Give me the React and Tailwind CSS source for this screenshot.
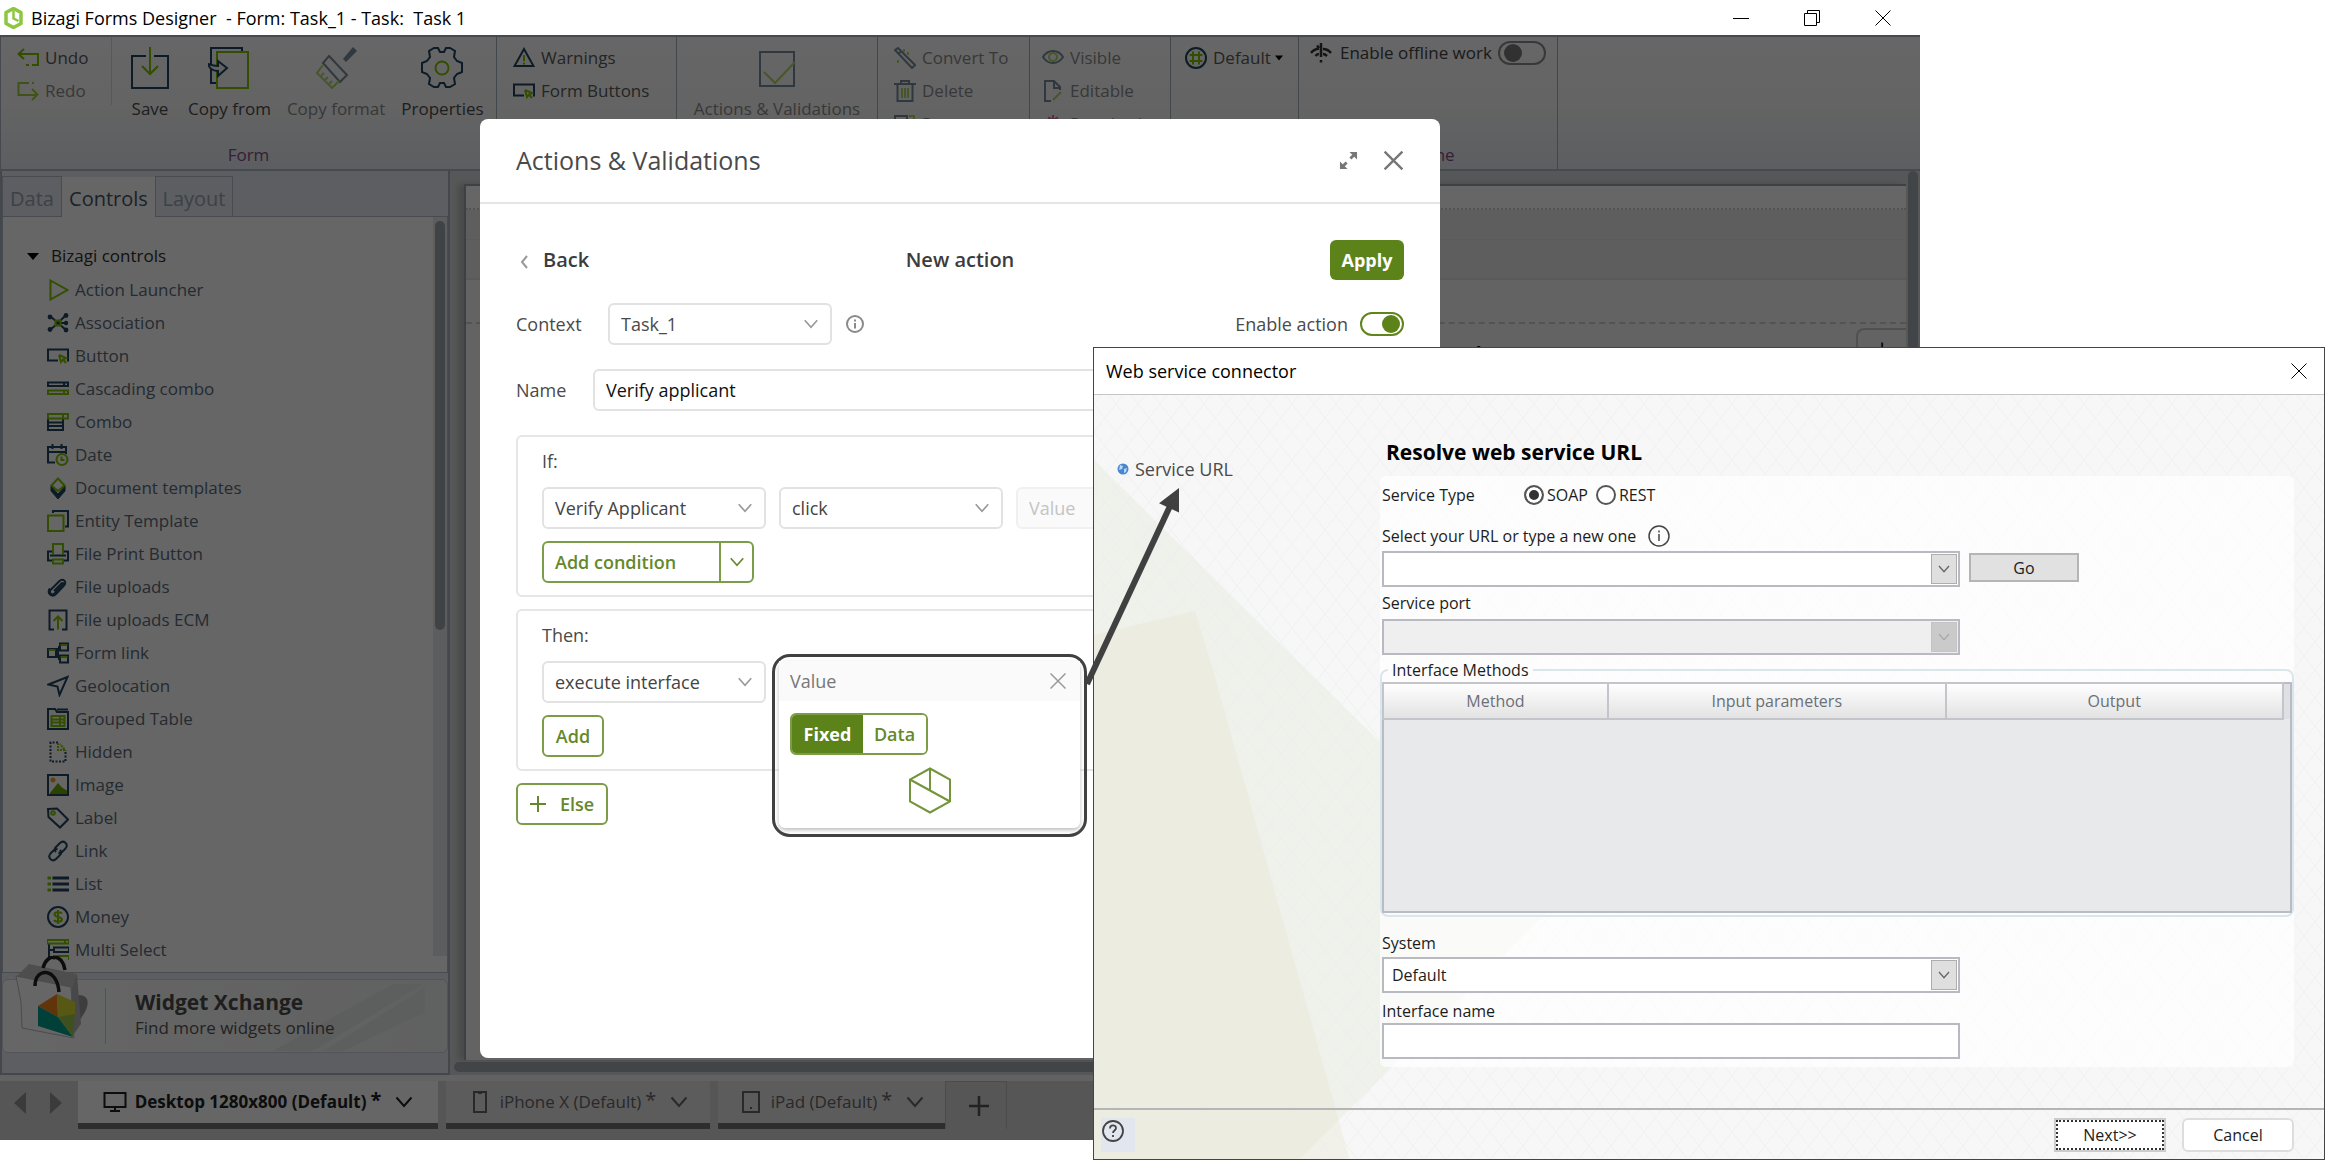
import { useState } from 'react';

const NAVY = '#1f4560';
const LIME = '#7fc200';

// Icons of the toolbox tree, drawn on a 22x22 grid
const treeIcons = {
  launcher: <path d="M3.5 1.5l17 9.5-17 9.5z" stroke={LIME} />,
  association: (
    <>
      <path d="M3 4l8 7 8-8M3 18l8-7h8M11 11l8 7" stroke={NAVY} />
      <g fill={NAVY} stroke="none">
        <circle cx="3" cy="5" r="2.4" /><circle cx="19" cy="3.500" r="2.400" />
        <circle cx="3" cy="17.500" r="2.400" /><circle cx="19" cy="11" r="2.200" /><circle cx="19" cy="18" r="2.400" />
      </g>
      <rect x="8.500" y="8.500" width="5" height="5" stroke={LIME} />
    </>
  ),
  button: (
    <>
      <path d="M11 15.500H1V4.500h20v11h-1" stroke={NAVY} />
      <path d="M12 10l7 3-3 1.500 3 3.500M12 10l2 7 2-2.500" stroke={LIME} />
    </>
  ),
  cascading: (
    <>
      <path d="M1 4.500h20v3.500H1zM17 4.500v3" stroke={NAVY} />
      <path d="M1 12.500h20V16H1zM17 12.500V16" stroke={LIME} />
    </>
  ),
  combo: (
    <>
      <path d="M1 7v12h15V7M1 11.500h15M1 15h15" stroke={NAVY} />
      <path d="M1 3h20v4.500H1zM16 3v4.500" stroke={LIME} />
    </>
  ),
  date: (
    <>
      <path d="M8 18.500H1V3h18v7M1 8h18M5.500 0v5M14.500 0v5" stroke={NAVY} />
      <circle cx="15" cy="15.500" r="5.500" stroke={LIME} />
      <path d="M14.500 12.500V16h3" stroke={LIME} />
    </>
  ),
  layers: (
    <>
      <path d="M4 9l7 8 7-8v5l-7 8-7-8z" fill={NAVY} stroke={NAVY} strokeWidth="1" />
      <path d="M11 1.500l6.500 7L11 14 4.500 8.500z" stroke={LIME} />
    </>
  ),
  entity: (
    <>
      <path d="M6 3V1h15v15.500h-3" stroke={NAVY} />
      <rect x="1" y="5.500" width="15.500" height="15.500" stroke={LIME} />
    </>
  ),
  print: (
    <>
      <path d="M5 17.500H1V8.500h4M17 8.500h4v9h-4M3 12.500h16" stroke={NAVY} />
      <path d="M6 11.500V1h10v10.500M6 16.500h10v4H6z" stroke={LIME} />
    </>
  ),
  clip: (
    <path d="M8 14l7.500-7.500c1.500-1.500 3 0 1.500 1.500L8.500 16.500c-2.500 2.500-6.500-1-3.500-4l8.500-8.500c3.500-3.500 8 1 4.500 4.500L10 17c-4 4-10-1-6-5.500" stroke={NAVY} transform="translate(-1 1)" />
  ),
  ecm: (
    <>
      <path d="M7 20.500H2.500V1.500h17v19H15" stroke={NAVY} />
      <path d="M11 20.500V8M6.500 12L11 7.500l4.500 4.500" stroke={LIME} />
    </>
  ),
  formlink: (
    <>
      <path d="M1 7h8v8H1zM13 1.500h8v7h-8zM13 13.500h8v7h-8zM9 11h2M11 6v10M11 5h2M11 17h2" stroke={NAVY} />
      <path d="M1.500 8h7M13.500 3h7M13.500 15h7" stroke={LIME} />
    </>
  ),
  geo: <path d="M1.500 9.500L20.500 2l-8 18-2-8.500z" stroke={NAVY} />,
  grouped: (
    <>
      <path d="M1 1h7l2 3h11v17H1zM10 1.500h11" stroke={NAVY} />
      <path d="M4.500 8h13v10h-13zM4.500 11.500h13M4.500 14.500h13M13 8v10" stroke={LIME} />
    </>
  ),
  hidden: (
    <>
      <path d="M11 1.500H3.500v19h15V9" stroke={NAVY} strokeDasharray="2 1.500" />
      <path d="M11 2v7h7L13 3" stroke={LIME} strokeDasharray="2 1" />
    </>
  ),
  image: (
    <>
      <path d="M3 19l8-10 4 4.500 5 3V20H3z" fill="#6aa800" stroke="none" />
      <circle cx="6" cy="6" r="2.500" fill="#f0a020" stroke="none" />
      <rect x="1" y="1" width="20" height="20" stroke={NAVY} />
    </>
  ),
  label: (
    <>
      <path d="M1 2l9-.5L21 12.500l-8 8L1.500 10z" stroke={NAVY} />
      <circle cx="6" cy="6" r="1.800" stroke={LIME} />
    </>
  ),
  link: (
    <path d="M9 12c-1.500-1.500-1.500-3.500 0-5l4-4c3.500-3.500 9 1 5.500 5.500L15 12c-1 1-2.500 1-3.500.5M13 10c1.500 1.500 1.500 3.500 0 5l-4 4c-3.500 3.500-9-1-5.500-5.500L7 10c1-1 2.500-1 3.500-.5" stroke={NAVY} />
  ),
  list: (
    <>
      <path d="M5.500 5H22M5.500 11H22M5.500 17H22" stroke={NAVY} strokeWidth="3" />
      <path d="M.5 5h3.500M.5 11H4M.5 17H4" stroke={LIME} strokeWidth="3" />
    </>
  ),
  money: (
    <>
      <circle cx="11" cy="11" r="10" stroke={NAVY} />
      <path d="M15 7.500c-1-1.500-7.500-2-7.500 1s7.500 2 7.500 5-7 2.500-8 .500M11 4v14" stroke={LIME} />
    </>
  ),
  multi: (
    <>
      <path d="M2 5v14h5M2 11h4M7 8.500h15V13H7z" stroke={NAVY} />
      <path d="M0 1h22v3.500H0zM18 1v3M7 21v-4h15v4" stroke={LIME} />
    </>
  )
};

const controls = [
  ['Action Launcher', 'launcher'],
  ['Association', 'association'],
  ['Button', 'button'],
  ['Cascading combo', 'cascading'],
  ['Combo', 'combo'],
  ['Date', 'date'],
  ['Document templates', 'layers'],
  ['Entity Template', 'entity'],
  ['File Print Button', 'print'],
  ['File uploads', 'clip'],
  ['File uploads ECM', 'ecm'],
  ['Form link', 'formlink'],
  ['Geolocation', 'geo'],
  ['Grouped Table', 'grouped'],
  ['Hidden', 'hidden'],
  ['Image', 'image'],
  ['Label', 'label'],
  ['Link', 'link'],
  ['List', 'list'],
  ['Money', 'money'],
  ['Multi Select', 'multi']
];

function Chevron({ className }) {
  return (
    <svg className={className} viewBox="0 0 18 12" fill="none" stroke="currentColor" strokeWidth="2">
      <path d="M1.500 1.500L9 10l7.500-8.500" />
    </svg>
  );
}

function Cross({ className }) {
  return (
    <svg className={className} viewBox="0 0 16 16" fill="none" stroke="currentColor">
      <path d="M.5.5l15 15M15.500.5l-15 15" />
    </svg>
  );
}

function BigButton({ label, disabled, children }) {
  return (
    <button
      type="button"
      disabled={disabled}
      className={`flex min-w-11 flex-col items-center pt-2.5 ${disabled ? 'text-[#8c8c8c]' : 'text-[#4c4c4c]'}`}
    >
      <svg className={`h-[42px] w-[42px] ${disabled ? 'opacity-60' : ''}`} viewBox="0 0 42 42" fill="none" strokeWidth="2">
        {children}
      </svg>
      <span className="mt-2 leading-6 whitespace-nowrap">{label}</span>
    </button>
  );
}

function SmallButton({ label, disabled, faded, children }) {
  return (
    <button
      type="button"
      disabled={disabled}
      className={`flex h-[33px] items-center gap-1.5 whitespace-nowrap ${disabled ? 'text-[#8c8c8c]' : 'text-[#5a5a5a]'}`}
    >
      <svg className={`h-[22px] w-[22px] ${faded ? 'opacity-60' : ''}`} viewBox="0 0 22 22" fill="none" strokeWidth="2">
        {children}
      </svg>
      {label}
    </button>
  );
}

function Group({ className, label, children }) {
  return (
    <div className={`flex shrink-0 flex-col border-r border-[#a4b2bc] ${className}`}>
      <div className="flex flex-1">{children}</div>
      <div className="h-7 text-center leading-7 text-[#8a4f87]">{label}</div>
    </div>
  );
}

function Ribbon() {
  return (
    <div className="flex h-[136px] overflow-hidden border-y-2 border-l border-y-[#aebac4] border-l-[#aebac4] bg-linear-to-b from-white via-[#fafafa] to-[#e6ebf2] text-[17px]">
      <Group className="w-[496px]" label="Form">
        <div className="mb-2 h-[68px] w-[111px] border-r border-[#d8dde1] pt-1 pl-4">
          <SmallButton label="Undo">
            <path d="M7 2L1.500 7 7 12M2 7h19v11h-6M12 18H9" stroke={LIME} />
          </SmallButton>
          <SmallButton label="Redo" disabled>
            <path d="M12 3H1.500v12H12M15 9l5.500 5.500L15 20M9 15h11M15 3h2" stroke={LIME} opacity=".75" />
          </SmallButton>
        </div>
        <div className="ml-4 flex items-start gap-4">
          <BigButton label="Save">
            <path d="M17 9H3v32h36V9H25" stroke={NAVY} />
            <path d="M21 0v27M13 19l8 8 8-8" stroke={LIME} />
          </BigButton>
          <BigButton label="Copy from">
            <path d="M8 36H3V1h31v5" stroke={NAVY} />
            <rect x="9" y="5" width="31" height="36" stroke={LIME} />
            <path d="M0 17c2 6 6 7 10 7v5l9-8-9-7v5c-4 0-7-1-10-2z" stroke={NAVY} fill="#f6f6f6" />
          </BigButton>
          <BigButton label="Copy format" disabled>
            <path d="M28 12L38 0l4 4-11 11z" fill={NAVY} />
            <path d="M14 9l18 19-7 7L8 16z" stroke={NAVY} />
            <path d="M8 18l-6 8 15 15 7-7M6 29l3-3M10 33l3-3M14 37l3-3" stroke={LIME} />
          </BigButton>
          <BigButton label="Properties">
            <path d="M13 1h4l2 4h4l2-4h4l5 3-1 6 3 4 5 2v9l-5 2-3 4 1 6-5 3h-4l-2-4h-4l-2 4h-4l-5-3 1-6-3-4-5-2v-9l5-2 3-4-1-6z" stroke={NAVY} />
            <circle cx="21" cy="21" r="6.500" stroke={LIME} />
          </BigButton>
        </div>
      </Group>

      <Group className="w-[180px]">
        <div className="pt-1 pl-4">
          <SmallButton label="Warnings">
            <path d="M11 2l9.500 17h-19z" stroke={NAVY} />
            <path d="M11 8v6M11 15.500v2" stroke={LIME} />
          </SmallButton>
          <SmallButton label="Form Buttons">{treeIcons.button}</SmallButton>
        </div>
      </Group>

      <Group className="w-[201px]">
        <div className="mx-auto">
          <BigButton label="Actions & Validations" disabled>
            <rect x="4" y="5" width="34" height="34" stroke={NAVY} />
            <path d="M8 25l11 11 20-21" stroke={LIME} />
          </BigButton>
        </div>
      </Group>

      <Group className="w-[152px]">
        <div className="pt-1 pl-4">
          <SmallButton label="Convert To" disabled faded>
            <path d="M1 3l3-2 17 17-3 3zM5 6l3-2" stroke={NAVY} />
            <path d="M10 2v3M14 5v3M4 13v3" stroke={LIME} />
          </SmallButton>
          <SmallButton label="Delete" disabled faded>
            <path d="M0 4h22M3.500 4v17h15V4M7 4V1h8v3" stroke={NAVY} />
            <path d="M8 8v10M11 8v10M14 8v10" stroke={LIME} />
          </SmallButton>
          <SmallButton label="Remove" disabled faded>
            <path d="M1 3h12v12H1z" stroke={NAVY} />
            <path d="M15 3h5v5" stroke={LIME} />
          </SmallButton>
        </div>
      </Group>

      <Group className="w-[141px]">
        <div className="pt-1 pl-3">
          <SmallButton label="Visible" disabled faded>
            <path d="M1 10c5-8 15-8 20 0-5 8-15 8-20 0z" stroke={NAVY} />
            <circle cx="11" cy="10" r="4" stroke={LIME} />
          </SmallButton>
          <SmallButton label="Editable" disabled faded>
            <path d="M9 21H3V1h9l6 6v3M12 1v7h6" stroke={NAVY} />
            <path d="M19 12l-8 8" stroke={LIME} />
          </SmallButton>
          <SmallButton label="Required" disabled faded>
            <path d="M11 2v10M6 4.500l10 5M16 4.500l-10 5" stroke="#d02040" />
          </SmallButton>
        </div>
      </Group>

      <Group className="w-32">
        <div className="flex h-[41px] items-center gap-1 pl-3.5">
          <SmallButton label="Default">
            <circle cx="11" cy="11" r="10" stroke={NAVY} />
            <path d="M8 4.500v13M14 4.500v13M4.500 8h13M4.500 14h13" stroke={LIME} />
          </SmallButton>
          <svg className="h-1.5 w-2" viewBox="0 0 10 6"><path d="M0 0h10L5 6z" /></svg>
        </div>
      </Group>

      <Group className="w-[259px]" label="Offline">
        <label className="flex h-8 items-center whitespace-nowrap pl-[11px] text-[#444]">
          <svg className="mr-2 h-5 w-[22px]" viewBox="0 0 22 20" fill="none" stroke="#333" strokeWidth="2.500">
            <path d="M11 0v14M11 17v2.500M1 10c2-3 5-4 8-4.500M13 6c3 0 6 1.500 8 4M5.500 13c1-1.500 2-2 3.500-2M13 11c1.500 0 3 1 4 2M7 2.500L9 5" />
          </svg>
          Enable offline work
          <input type="checkbox" className="peer sr-only" />
          <span className="ml-1.5 flex h-6 w-12 items-center rounded-full border-2 border-[#8d8d8d] px-1">
            <span className="h-[18px] w-[18px] rounded-full bg-[#7c7c7c]" />
          </span>
        </label>
      </Group>
    </div>
  );
}

function Toolbox() {
  return (
    <aside className="flex w-[450px] shrink-0 flex-col border-2 border-t-0 border-[#aab4bf] bg-[#e6ebf2] pb-5">
      <div className="flex items-end pt-[5px] text-xl">
        <button type="button" className="h-[41px] w-[60px] border border-[#b4bdc8] pt-1 text-[#99a3ae]">Data</button>
        <button type="button" className="h-10 w-[93px] bg-white pt-1 text-[#455666]">Controls</button>
        <button type="button" className="h-[41px] w-[78px] border border-[#b4bdc8] pt-1 text-[#99a3ae]">Layout</button>
        <div className="flex-1 border-b border-[#b4bdc8]" />
      </div>
      <div className="flex flex-1 justify-between border border-t-0 border-[#b4bdc8] bg-white text-[17px]">
        <div className="pt-[22px] pl-6">
          <button type="button" className="flex h-[34px] items-center gap-3 text-[#2e2e2e]">
            <svg className="h-2 w-3" viewBox="0 0 12 8"><path d="M0 1h12L6 8z" /></svg>
            Bizagi controls
          </button>
          <ul className="pl-5">
            {controls.map(([label, icon]) => (
              <li key={label} className="flex h-[33px] items-center gap-1.5 text-[#5b6b7b]">
                <svg className="h-[22px] w-[22px]" viewBox="0 0 22 22" fill="none" strokeWidth="2">{treeIcons[icon]}</svg>
                {label}
              </li>
            ))}
          </ul>
        </div>
        <div className="mb-4 w-3.5 bg-[#e6e8ec] px-[2px] pt-1">
          <div className="h-[409px] rounded-full bg-[#a0a9b0]" />
        </div>
      </div>
      <a href="#xchange" className="relative mt-1.5 flex h-[74px] flex-col justify-center overflow-visible rounded-md border border-[#ccd2da] bg-linear-to-r from-white to-[#f1f2f3] pb-1 pl-[132px]">
        <svg className="absolute inset-0 h-full w-full" viewBox="0 0 444 74" preserveAspectRatio="none">
          <path d="M270 73L390 4h30L310 73zM320 73L422 8v25L340 73z" fill="#e9eaec" />
        </svg>
        <svg className="absolute bottom-2.5 left-3 h-[86px] w-[76px]" viewBox="0 0 76 86">
          <path d="M56 40c16-4 20 4 14 16L56 78z" fill="#999" />
          <path d="M2 20l12-12 48 10-6 20z" fill="#c4c4c4" />
          <path d="M1 20l56 12 5-14 4 50-10 14-4-50z" fill="#b4b4b4" />
          <path d="M1 20l55 11 3 51L7 72 6 46z" fill="#fff" stroke="#bbb" />
          <path d="M42 38l-19 12 20 11z" fill="#f58220" />
          <path d="M42 38l18 8v14l-17 1z" fill="#d8dc30" />
          <path d="M23 50l20 11 15 20-35-11z" fill="#00a08c" />
          <path d="M43 61l17-3-2 23z" fill="#9cc84c" />
          <path d="M20 30c0-19 22-19 24 6M28 12C32-4 48-2 50 14" fill="none" stroke="#222" strokeWidth="3.500" />
        </svg>
        <span className="absolute inset-y-2 left-[102px] border-l border-[#ccc]" />
        <span className="relative text-[21px] leading-7 font-bold text-[#4c4c4c]">Widget Xchange</span>
        <span className="relative text-[17px] leading-6 text-[#555]">Find more widgets online</span>
      </a>
    </aside>
  );
}

function FormCanvas() {
  return (
    <section className="flex flex-1 flex-col bg-[#d8dadb]">
      <div className="flex flex-1">
        <div className="mt-[13px] ml-3.5 flex-1 border-t-2 border-l-2 border-[#9aa3a9] bg-[#f7f7f7] shadow-[-6px_0_6px_#b5b8ba]">
          <div className="h-6 border-b-2 border-dotted border-[#d0d0d0] bg-white" />
          <div className="h-[30px] border-b border-[#e2e2e2] bg-[#ebebeb]" />
          <div className="h-10 border-b-2 border-[#dfdfdf] bg-[#ebebeb]" />
          <div className="h-11 border-b-2 border-dashed border-[#d0d0d0]" />
          <div className="flex justify-end">
            <div className="mr-[348px] pt-4 text-[19px] font-bold">another</div>
            <div className="mt-1 flex h-10 w-[50px] items-center justify-center rounded-tl-lg border-2 border-r-0 border-[#c9c9c9] text-2xl">+</div>
          </div>
        </div>
        <div className="w-3.5 px-[2px]"><div className="h-full rounded-full bg-[#a3acb3]" /></div>
      </div>
      <div className="pt-0.5 pb-[3px] pl-1"><div className="h-2.5 rounded-full bg-[#a3acb3]" /></div>
    </section>
  );
}

function DeviceTab({ active, label, className, children }) {
  return (
    <button
      type="button"
      className={`flex h-12 items-center justify-center border-b-[6px] border-[#747474] ${active ? 'bg-white font-bold text-[#222]' : 'bg-[#e6e6e6] text-[#666]'} ${className}`}
    >
      <svg className="mr-2 h-6 w-6" viewBox="0 0 24 24" fill="none" stroke="currentColor" strokeWidth="2">{children}</svg>
      {label} <span className="ml-1 pb-1 text-xl">*</span>
      <Chevron className="ml-3.5 h-3 w-[18px]" />
    </button>
  );
}

function DeviceTabs() {
  return (
    <div className="bg-[#f4f4f4] pt-1.5">
      <div className="flex h-[59px] gap-2 bg-[#d6d6d6] text-[17px]">
        <div className="-mr-2 flex h-11 w-[78px] items-center gap-6 pl-3.5">
          <svg className="h-[22px] w-3" viewBox="0 0 12 22"><path d="M12 0v22L0 11z" fill="#949494" /></svg>
          <svg className="h-[22px] w-3" viewBox="0 0 12 22"><path d="M0 0v22l12-11z" fill="#949494" /></svg>
        </div>
        <DeviceTab active label="Desktop 1280x800 (Default)" className="w-[360px]">
          <path d="M1.500 3h21v14h-21zM7 21h10M12 17v4" />
        </DeviceTab>
        <DeviceTab label="iPhone X (Default)" className="w-[264px]">
          <path d="M6 2h12v20H6zM10 3h4" />
        </DeviceTab>
        <DeviceTab label="iPad (Default)" className="w-[227px]">
          <path d="M4 2h16v20H4zM11 18h2" />
        </DeviceTab>
        <button type="button" aria-label="Add device" className="-ml-2 flex h-12 w-[62px] items-center justify-center border border-b-0 border-[#bbb] pl-1.5">
          <svg className="h-5 w-5" viewBox="0 0 20 20" stroke="#555" strokeWidth="2.500"><path d="M10 0v20M0 10h20" /></svg>
        </button>
      </div>
    </div>
  );
}

function SelectBox({ label, value, disabled, className }) {
  return (
    <span className={`relative block ${className}`}>
      <select aria-label={label} disabled={disabled} className="h-[42px] w-full appearance-none rounded-md border-2 border-[#e2e2e2] bg-white pl-[11px] text-[#444] disabled:border-[#f0f0f0] disabled:bg-[#fafafa] disabled:text-[#c4c4c4] disabled:opacity-100">
        <option>{value}</option>
      </select>
      {!disabled && <Chevron className="pointer-events-none absolute top-4 right-3 h-2.5 w-[18px] text-[#999]" />}
    </span>
  );
}

function Switch({ checked, onChange, label }) {
  return (
    <label className="flex items-center gap-3">
      {label}
      <input type="checkbox" checked={checked} onChange={onChange} className="peer sr-only" />
      <span className={`flex h-6 w-11 items-center rounded-full border-2 border-[#5f851b] px-[2px] ${checked ? 'justify-end' : ''}`}>
        <span className="h-[18px] w-[18px] rounded-full bg-[#5c821a]" />
      </span>
    </label>
  );
}

function ActionsModal() {
  const [enabled, setEnabled] = useState(true);
  const [name, setName] = useState('Verify applicant');

  return (
    <div className="relative flex w-[960px] flex-col rounded-lg bg-white text-lg text-[#4a4a4a]">
      <header className="flex h-[85px] items-center border-b-2 border-[#e6e6e6] pr-[37px] pl-9">
        <h2 className="flex-1 text-[25px]">Actions &amp; Validations</h2>
        <button type="button" aria-label="Expand" className="mr-[26px] text-[#777]">
          <svg className="h-[19px] w-[19px]" viewBox="0 0 20 20" fill="currentColor" stroke="currentColor" strokeWidth="3">
            <path d="M11 1h8v8zM9 19H1v-8z" stroke="none" />
            <path d="M12 8l4-4M4 16l4-4" />
          </svg>
        </button>
        <button type="button" aria-label="Close" className="text-[#777]"><Cross className="h-[19px] w-[19px] stroke-2" /></button>
      </header>

      <div className="px-9 pt-9">
        <div className="grid grid-cols-3 items-center text-xl font-semibold text-[#3c3c3c]">
          <button type="button" className="flex items-center gap-3.5 justify-self-start pl-1">
            <svg className="mt-1 h-3.5 w-[9px]" viewBox="0 0 9 14" fill="none" stroke="#999" strokeWidth="2"><path d="M7 1L2 7l5 6" /></svg>
            Back
          </button>
          <h3 className="text-center">New action</h3>
          <button type="button" className="h-10 w-[74px] justify-self-end rounded-md bg-[#5c821a] text-lg font-bold text-white">Apply</button>
        </div>

        <div className="mt-[23px] flex items-center">
          <label htmlFor="context" className="w-[92px]">Context</label>
          <span className="relative block w-56">
            <select id="context" className="h-[42px] w-full appearance-none rounded-md border-2 border-[#e2e2e2] bg-white pl-[11px]">
              <option>Task_1</option>
            </select>
            <Chevron className="pointer-events-none absolute top-4 right-3 h-2.5 w-[18px] text-[#999]" />
          </span>
          <svg className="ml-3.5 h-[18px] w-[18px]" viewBox="0 0 18 18" fill="none" stroke="#8a8a8a" strokeWidth="2">
            <circle cx="9" cy="9" r="8" /><path d="M9 8v5.500M9 4.500v2" />
          </svg>
          <div className="flex-1" />
          <Switch label="Enable action" checked={enabled} onChange={() => setEnabled(!enabled)} />
        </div>

        <div className="mt-6 flex items-center">
          <label htmlFor="action-name" className="w-[77px]">Name</label>
          <input
            id="action-name"
            value={name}
            onChange={(e) => setName(e.target.value)}
            className="h-[42px] flex-1 rounded-md border-2 border-[#e2e2e2] px-[11px] text-[#111]"
          />
        </div>

        <section className="mt-6 h-[162px] rounded-md border-2 border-[#e6e6e6] px-6 pt-2.5">
          <h4 className="leading-7">If:</h4>
          <div className="mt-3 flex gap-[13px]">
            <SelectBox label="Control" value="Verify Applicant" className="w-56" />
            <SelectBox label="Event" value="click" className="w-56" />
            <SelectBox label="Value" value="Value" disabled className="w-56" />
          </div>
          <div className="mt-3 flex h-[42px] w-[212px] rounded-md border-2 border-[#7d9c48] font-semibold text-[#65882b]">
            <button type="button" className="flex-1 border-r-2 border-[#7d9c48] pl-[11px] text-left">Add condition</button>
            <button type="button" aria-label="More conditions" className="flex w-[31px] items-center justify-center"><Chevron className="h-2.5 w-[18px]" /></button>
          </div>
        </section>

        <section className="mt-3 h-[162px] rounded-md border-2 border-[#e6e6e6] px-6 pt-2.5">
          <h4 className="leading-7">Then:</h4>
          <SelectBox label="Action" value="execute interface" className="mt-3 w-56" />
          <button type="button" className="mt-3 h-[42px] w-[62px] rounded-md border-2 border-[#7d9c48] font-semibold text-[#65882b]">Add</button>
        </section>

        <button type="button" className="mt-3 flex h-[42px] w-[92px] items-center gap-3.5 rounded-md border-2 border-[#7d9c48] pl-3 font-semibold text-[#65882b]">
          <svg className="h-4 w-4" viewBox="0 0 16 16" stroke="currentColor" strokeWidth="2"><path d="M8 0v16M0 8h16" /></svg>
          Else
        </button>
      </div>

      {/* Value editor, highlighted */}
      <div className="absolute top-[535px] left-[292px] w-[315px] rounded-[18px] border-[3px] border-[#404040] px-1 pt-1 pb-1.5">
        <div className="rounded-md bg-white pb-3.5 shadow-[0_2px_4px_#bbb]">
          <div className="flex h-10 items-center justify-between bg-[#fafafa] pr-3.5 pl-[11px] text-[#777]">
            Value
            <button type="button" aria-label="Close value" className="text-[#999]"><Cross className="h-4 w-4 stroke-[1.5]" /></button>
          </div>
          <div className="mt-3 ml-[11px] flex h-[42px] w-[138px] overflow-hidden rounded-md border-2 border-[#7d9c48] font-semibold">
            <button type="button" className="w-[71px] bg-[#5c821a] font-bold text-white">Fixed</button>
            <button type="button" className="flex-1 bg-white text-[#65882b]">Data</button>
          </div>
          <svg className="mx-auto mt-3 h-[47px] w-[42px]" viewBox="0 0 42 47" fill="none" stroke="#729539" strokeWidth="2">
            <path d="M21 1.500l20 11v22l-20 11-20-11v-22zM1 12.500l40 22M21 1.500v22" />
          </svg>
        </div>
      </div>
    </div>
  );
}

function WinSelect({ id, value, disabled }) {
  return (
    <span className="relative block w-[578px]">
      <select id={id} disabled={disabled} className="block h-9 w-full appearance-none border-2 border-[#b8b9c1] bg-white pl-2 text-[#1c1c1c] disabled:bg-[#efefef] disabled:opacity-100">
        <option>{value}</option>
      </select>
      <span className={`pointer-events-none absolute inset-y-[3px] right-[3px] flex w-[26px] items-center justify-center border ${disabled ? 'border-[#c4c4c4] bg-[#cacaca] text-[#aaa]' : 'border-[#adadad] bg-[#dfdfdf] text-[#666]'}`}>
        <Chevron className="h-2 w-3" />
      </span>
    </span>
  );
}

function DialogBackdrop() {
  return (
    <svg className="absolute inset-0 h-full w-full" aria-hidden="true">
      <defs>
        <pattern id="mesh" width="22" height="28" patternUnits="userSpaceOnUse">
          <path d="M0 0l22 28M22 0L0 28" stroke="#e9eaea" strokeWidth="1" opacity=".5" />
        </pattern>
      </defs>
      <rect width="100%" height="100%" fill="#f7f7f7" />
      <path d="M0 112L287 395 457 560 204 813H0z" fill="#eff2eb" />
      <path d="M0 287L101 263 122 333 256 813H0z" fill="#e2dfbe" opacity=".25" />
      <rect width="100%" height="100%" fill="url(#mesh)" />
    </svg>
  );
}

function ServiceDialog() {
  const [type, setType] = useState('SOAP');

  return (
    <div className="absolute top-[347px] right-0 bottom-0 left-[1093px] flex flex-col border border-[#444] text-base text-[#1c1c1c]">
      <DialogBackdrop />
      <header className="relative flex h-[47px] shrink-0 items-center justify-between border-b border-[#c6c6c6] bg-white pr-[17px] pl-3 text-lg text-black">
        Web service connector
        <button type="button" aria-label="Close dialog"><Cross className="h-4 w-4" /></button>
      </header>

      <div className="relative flex flex-1">
        <nav className="w-[286px] shrink-0 pt-[60px] pl-[23px]">
          <a href="#service-url" className="flex items-center gap-1.5 text-lg text-[#4a4a4a]">
            <svg className="h-3 w-3" viewBox="0 0 12 12">
              <circle cx="6" cy="6" r="5.500" fill="#4a86cf" /><path d="M3 2l3 1-1 3-3 1zM7 6l3-1-1 4-2 1z" fill="#b9d8f2" />
            </svg>
            Service URL
          </a>
        </nav>

        <main className="mr-[30px] flex-1 pt-[41px]">
          <h2 className="pl-1.5 text-[21px] leading-8 font-bold text-black">Resolve web service URL</h2>
          <div className="mt-2 rounded-md bg-white/70 pb-2 pl-0.5">
            <fieldset className="flex h-[38px] items-center">
              <span className="w-[142px]">Service Type</span>
              {['SOAP', 'REST'].map((t) => (
                <label key={t} className="mr-2 flex items-center gap-[3px]">
                  <input
                    type="radio"
                    name="service-type"
                    checked={type === t}
                    onChange={() => setType(t)}
                    className="h-5 w-5 appearance-none rounded-full border-2 border-[#555] bg-white checked:bg-[#333] checked:shadow-[inset_0_0_0_3px_white]"
                  />
                  {t}
                </label>
              ))}
            </fieldset>
            <div className="flex h-[37px] items-center gap-3 pt-1.5">
              <label htmlFor="service-address">Select your URL or type a new one</label>
              <svg className="h-[22px] w-[22px]" viewBox="0 0 22 22" fill="none" stroke="#444" strokeWidth="1.500">
                <circle cx="11" cy="11" r="10" /><path d="M11 9v7M11 5.500v2" />
              </svg>
            </div>
            <div className="flex gap-[9px]">
              <WinSelect id="service-address" value="" />
              <button type="button" className="mt-0.5 h-[29px] w-[110px] border-2 border-[#b5b5b5] bg-[#e1e1e1] leading-6">Go</button>
            </div>
            <label htmlFor="service-port" className="block h-8 leading-8">Service port</label>
            <WinSelect id="service-port" value="" disabled />

            <fieldset className="-ml-0.5 mt-[3px] rounded-lg border-2 border-[#dbe5ec] pb-0.5">
              <legend className="ml-1.5 px-1 leading-6">Interface Methods</legend>
              <table className="w-full table-fixed border-collapse border-2 border-[#b9bcc4] bg-[#e8e9eb]">
                <thead>
                  <tr className="h-9 bg-linear-to-b from-white to-[#e2e2e2] text-[#6b6f78]">
                    <th className="w-[225px] border-2 border-[#c3c5cb] font-normal">Method</th>
                    <th className="border-2 border-[#c3c5cb] font-normal">Input parameters</th>
                    <th className="border-2 border-[#c3c5cb] font-normal">Output</th>
                    <th className="w-2 bg-[#dfe0e4]" />
                  </tr>
                </thead>
                <tbody>
                  <tr className="h-[193px]"><td colSpan="4" /></tr>
                </tbody>
              </table>
            </fieldset>

            <label htmlFor="system" className="block h-10 pt-3.5">System</label>
            <WinSelect id="system" value="Default" />
            <label htmlFor="interface-name" className="block h-[30px] leading-9">Interface name</label>
            <input id="interface-name" className="block h-9 w-[578px] border-2 border-[#b8b9c1] bg-white px-2" />
          </div>
        </main>
      </div>

      <footer className="relative flex h-[51px] shrink-0 items-center gap-4 border-t-2 border-[#b5b5b5] pr-[30px] pl-[7px]">
        <button type="button" aria-label="Help" className="mr-auto h-[34px] w-[34px] bg-[#e2e6ef]">
          <svg className="mb-2 h-6 w-6" viewBox="0 0 24 24" fill="none" stroke="#444" strokeWidth="1.800">
            <circle cx="12" cy="12" r="10" /><path d="M9 9.500c0-4 6-4 6-.5 0 2.500-3 2.500-3 5M12 16v2" />
          </svg>
        </button>
        <button type="button" className="h-[34px] w-28 border-2 border-[#ccc] bg-white"><span className="flex h-full items-center justify-center border-2 border-dotted border-[#333]">Next&gt;&gt;</span></button>
        <button type="button" className="h-[34px] w-28 rounded-md border-2 border-[#ddd] bg-white">Cancel</button>
      </footer>
    </div>
  );
}

export default function App() {
  return (
    <div className="relative flex min-h-screen flex-col bg-white pr-[405px] pb-5 font-['Open_Sans','Noto_Sans',sans-serif]">
      <header className="flex h-[35px] shrink-0 items-center pl-1 text-lg text-black">
        <svg className="mr-2 h-[22px] w-[19px]" viewBox="0 0 19 22" fill="none">
          <path d="M9.500 1.500l7.500 4v11l-7.500 4-7.500-4v-11z" fill="#fff" stroke="#8dc63f" strokeWidth="3.500" strokeLinejoin="round" />
          <path d="M9.500 3.500v8l5 2.500" stroke="#8dc63f" strokeWidth="2.500" />
        </svg>
        <h1 className="flex-1 whitespace-pre">{'Bizagi Forms Designer  - Form: Task_1 - Task:  Task 1'}</h1>
        <div className="flex items-center gap-[55px] pr-[29px]">
          <button type="button" aria-label="Minimize"><svg className="h-4 w-4" viewBox="0 0 16 16" stroke="#000"><path d="M0 8.500h16" /></svg></button>
          <button type="button" aria-label="Restore"><svg className="h-4 w-4" viewBox="0 0 16 16" fill="none" stroke="#000"><path d="M.5 3.500h12v12H.5zM3.500 3V.5h12v12H13" /></svg></button>
          <button type="button" aria-label="Close window"><Cross className="h-4 w-4" /></button>
        </div>
      </header>

      <div className="relative flex flex-1 flex-col">
        <Ribbon />
        <div className="flex flex-1">
          <Toolbox />
          <FormCanvas />
        </div>
        <DeviceTabs />
        <div className="absolute inset-0 flex justify-center bg-black/60 pt-[84px] pb-[82px]">
          <ActionsModal />
        </div>
      </div>

      <ServiceDialog />

      {/* Arrow from the value editor to the service URL step */}
      <svg className="absolute top-[488px] left-[1080px] h-[200px] w-[104px]" viewBox="0 0 104 200">
        <path d="M7 196L91 16" stroke="#404040" strokeWidth="6" />
        <path d="M98 2v21L81 15z" fill="#404040" stroke="#404040" strokeWidth="2" />
      </svg>
    </div>
  );
}
